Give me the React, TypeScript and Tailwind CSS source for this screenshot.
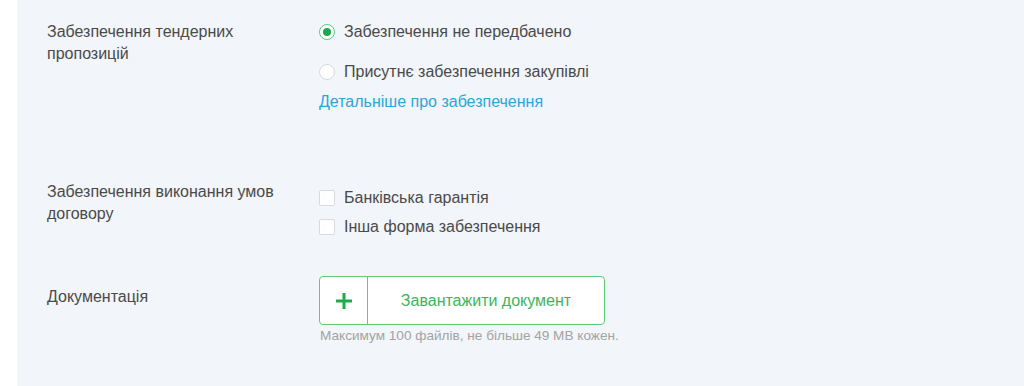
import React from 'react';

const Radio = ({ checked, label }: { checked?: boolean; label: string }) => (
  <label className="flex items-center gap-[9px] h-[22px]">
    <span
      className={
        checked
          ? 'w-4 h-4 rounded-full border border-[#5ccb7c] bg-white flex items-center justify-center'
          : 'w-4 h-4 rounded-full border border-[#d6dbe1] bg-white'
      }
    >
      {checked && <span className="w-2 h-2 rounded-full bg-[#1ea84c]" />}
    </span>
    <span>{label}</span>
  </label>
);

const Checkbox = ({ label }: { label: string }) => (
  <label className="flex items-center gap-[9px] h-[22px]">
    <span className="w-4 h-4 rounded-[2px] border border-[#d6dbe1] bg-white" />
    <span>{label}</span>
  </label>
);

export default function App() {
  return (
    <div className="w-[1024px] h-[386px] bg-white pl-[17px] font-['Liberation_Sans',Arial,sans-serif] text-[16px] leading-[22px] text-[#4a4a4a]">
      <div className="h-full bg-[#f2f5f9] pl-[30px] pt-[21px]">
        <div className="flex">
          <div className="w-[272px] pr-8">
            Забезпечення тендерних
            <br />
            пропозицій
          </div>
          <div className="flex flex-col">
            <Radio checked label="Забезпечення не передбачено" />
            <div className="mt-[18px]">
              <Radio label="Присутнє забезпечення закупівлі" />
            </div>
            <a className="mt-2 text-[#2ba6d9]">Детальніше про забезпечення</a>
          </div>
        </div>

        <div className="flex mt-[68px]">
          <div className="w-[272px] pr-8">
            Забезпечення виконання умов
            <br />
            договору
          </div>
          <div className="flex flex-col pt-[6px] gap-[7px]">
            <Checkbox label="Банківська гарантія" />
            <Checkbox label="Інша форма забезпечення" />
          </div>
        </div>

        <div className="flex mt-[38px]">
          <div className="w-[272px] pr-8 pt-[10px]">Документація</div>
          <div className="flex flex-col">
            <button className="w-[286px] h-[49px] flex bg-white border border-[#5ccb7c] rounded-[4px] text-[#3cb55e]">
              <span className="w-12 h-full border-r border-[#5ccb7c] flex items-center justify-center">
                <svg width="18" height="18" viewBox="0 0 18 18">
                  <path d="M9 1v16M1 9h16" stroke="#22a94c" strokeWidth="3" />
                </svg>
              </span>
              <span className="flex-1 h-full flex items-center justify-center">
                Завантажити документ
              </span>
            </button>
            <div className="mt-[2px] pl-[1px] text-[13.6px] leading-[18px] text-[#a3a3a3]">
              Максимум 100 файлів, не більше 49 MB кожен.
            </div>
          </div>
        </div>
      </div>
    </div>
  );
}
